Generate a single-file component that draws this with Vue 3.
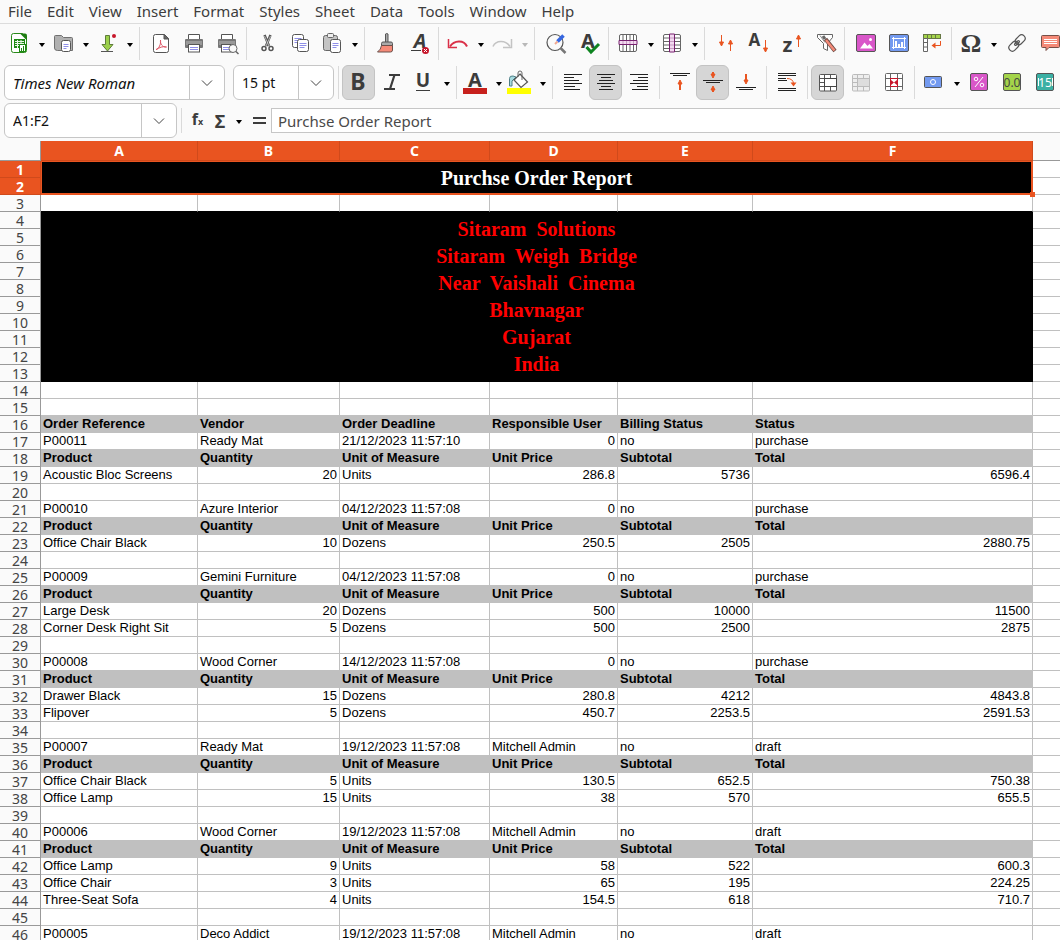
<script setup>
import { ref } from 'vue'

const ink = '#3c3c3c'
const orange = '#e95420'

const arrow = (x, y1, y2, shaft = 1) => {
  const d = y2 > y1 ? -1 : 1
  return `<path d="M${x} ${y1}V${y2 + d * 3}" stroke="${orange}" stroke-width="${shaft}"/><path d="M${x - 2} ${y2 + d * 4}H${x + 2}L${x} ${y2}Z" fill="${orange}" stroke="${orange}" stroke-width="1"/>`
}
const lines = (list) => `<path d="${list.map(([x, y, w]) => `M${x} ${y}h${w}`).join('')}" stroke="#222" stroke-width="1"/>`
const glyph = (t, x, y, size, extra = '') =>
  `<text x="${x}" y="${y}" font-family="Noto Sans, sans-serif" font-weight="700" font-size="${size}" fill="${ink}" text-anchor="middle" ${extra}>${t}</text>`
const sheet = (x, y, w, h) =>
  `<rect x="${x}" y="${y}" width="${w}" height="${h}" rx="2" fill="#fff" stroke="#555"/><path d="M${x + 2} ${y + 4}h${w - 4}m-${w - 4} 2h${w - 4}m-${w - 4} 2h${w - 6}" stroke="#8f8fe8"/>`

const icons = {
  new: `<path d="M5.500 1.500h9l4 4v13q0 2-2 2h-11q-2 0-2-2v-15q0-2 2-2z" fill="#fff" stroke="#2a8a1a"/><path d="M12 1.500h5q2 0 2 2v5z" fill="#1d7d12"/><path d="M6 7h11v9H6z" fill="#1d8a12"/><path d="M7 9.500h9m-9 2h9m-9 2h9M9.500 8v8m3.500-8v8" stroke="#e9f7e6"/><rect x="11.500" y="12.500" width="6" height="7" fill="#fff" stroke="#1d8a12"/><path d="M13.500 19v-3m2 3v-5" stroke="#1d8a12"/>`,
  open: `<path d="M2.500 16V4.500q0-1 1-1h6l2 2h8q1 0 1 1V18.500h-15q-3 0-3-2.500z" fill="#b0b0b0" stroke="#707070"/>${sheet(9.5, 8.5, 9, 11)}`,
  save: `<path d="M9.500 3.500h4v9h3.500L11.500 19 6 12.500h3.500z" fill="#9bd04a" stroke="#5f7d3a"/><path d="M5 19.500h12" stroke="#555"/><circle cx="18" cy="4" r="2" fill="#c7162b"/>`,
  pdf: `<path d="M7.500 2.500h9l4 4v12q0 2-2 2h-11q-2 0-2-2v-14q0-2 2-2z" fill="#fff" stroke="#555"/><path d="M16 2.500v4.500h4.500z" fill="#666" stroke="#555"/><path d="M8 17.500c3-1 5-5 4.500-9.500c-.5 4 2 7.500 6 7c-4-1-7 .5-10 2.500z" fill="none" stroke="#dd5565"/>`,
  print: `<path d="M7.500 8V2.500h11V8" fill="#fff" stroke="#555"/><path d="M5 7h16q1 0 1 1v7q0 1-1 1H5q-1 0-1-1V8q0-1 1-1z" fill="#777"/><path d="M5 9h16v4H5z" fill="#999"/><rect x="7.500" y="12.500" width="11" height="7.500" fill="#fff" stroke="#555"/><path d="M9 15.500h8m-8 2h8" stroke="#8f8fe8"/>`,
  preview: `<path d="M7.500 8V2.500h11V8" fill="#fff" stroke="#555"/><path d="M5 7h16q1 0 1 1v7q0 1-1 1H5q-1 0-1-1V8q0-1 1-1z" fill="#777"/><path d="M5 9h16v4H5z" fill="#999"/><rect x="7.500" y="12.500" width="11" height="7.500" fill="#fff" stroke="#555"/><path d="M9 15.500h6m-6 2h6" stroke="#8f8fe8"/><circle cx="19" cy="16.500" r="4" fill="#fafafa" stroke="#666"/><path d="M22 19.500l2.500 2.500" stroke="#666" stroke-width="1.500"/>`,
  cut: `<path d="M9.500 3L14 14M15.500 3L11 14" stroke="#555" stroke-width="2.500"/><path d="M9.500 4L14 14M15.500 4L11 14" stroke="#ddd" stroke-width=".7"/><circle cx="9" cy="16.500" r="2" fill="#fff" stroke="#555" stroke-width="1.500"/><circle cx="16" cy="16.500" r="2" fill="#fff" stroke="#555" stroke-width="1.500"/>`,
  copy: `${sheet(4.5, 2.5, 11, 13)}${sheet(9.5, 7.5, 11, 12)}`,
  paste: `<path d="M4.500 3.500h10q2 0 2 2v11q0 2-2 2h-10q-2 0-2-2v-11q0-2 2-2z" fill="#c4c4c4" stroke="#666"/><rect x="6.500" y="1.500" width="6" height="4" rx="1" fill="#eee" stroke="#666"/>${sheet(9.5, 7.5, 10, 13)}`,
  brush: `<path d="M12.500 2v9h2.500V2q-1.250-1-2.500 0z" fill="#aaa" stroke="#555"/><path d="M8.500 13.500v-2q0-1.500 1.500-1.500h8q1.500 0 1.500 1.500v2z" fill="#aaa" stroke="#555"/><path d="M8.500 13.500h11V18q0 2-2 2h-13q3.500-2.500 4-6.500z" fill="#f58a78" stroke="#6b504b"/>`,
  clear: `${glyph('A', 14, 16, 20, 'font-style="italic"')}<path d="M5 18.500h10" stroke="${ink}"/><circle cx="19.500" cy="18.500" r="3.500" fill="#c7162b"/><path d="M18 17l3 3m0-3l-3 3" stroke="#fff"/>`,
  undo: `<path d="M3 14.500C7 8 17 7.500 20 14.500" fill="none" stroke="#da3048" stroke-width="2"/><path d="M1.500 7v8.500H10" fill="none" stroke="#da3048" stroke-width="1.500"/>`,
  redo: `<path d="M19 14.500C15 8 5 7.500 2 14.500" fill="none" stroke="#c3c3c3" stroke-width="1.500"/><path d="M20.500 7v8.500H12" fill="none" stroke="#c3c3c3" stroke-width="1.500"/>`,
  find: `<circle cx="12" cy="10.500" r="8" fill="none" stroke="#555" stroke-width="1.200"/><path d="M17.500 16l5 5" stroke="#777" stroke-width="2.500"/><path d="M20.500 3.500l-6 6" stroke="#3566e0" stroke-width="3.500"/><path d="M14.500 9.500l-2.500 2.500" stroke="#f0a890" stroke-width="2"/>`,
  spell: `${glyph('A', 12, 16, 20)}<path d="M10.500 15l4.500 5L23 12" fill="none" stroke="#0e8420" stroke-width="3"/>`,
  row: `<rect x="2.500" y="2.500" width="17" height="17" rx="1.500" fill="#fff" stroke="#666"/><path d="M6 3v17m3.500-17v17m3.500-17v17m3.500-17v17" stroke="#666"/><path d="M2 8.500h18v4H2z" fill="#f3d9f0" stroke="#77216f"/><path d="M6 9v3m3.500-3v3m3.500-3v3m3.500-3v3" stroke="#c79bc2"/>`,
  col: `<rect x="2.500" y="2.500" width="17" height="17" rx="1.500" fill="#fff" stroke="#666"/><path d="M3 6h17m-17 3.500h17m-17 3.500h17m-17 3.500h17" stroke="#666"/><path d="M8.500 2v18h5V2z" fill="#f3d9f0" stroke="#77216f"/><path d="M9 6h4m-4 3.500h4m-4 3.500h4m-4 3.500h4" stroke="#c79bc2"/>`,
  sort: arrow(8.5, 3, 14) + arrow(17.5, 19, 8),
  asc: glyph('A', 8.5, 13.5, 17) + arrow(19.5, 8, 20),
  desc: glyph('z', 8.5, 20, 20) + arrow(19.5, 15, 3),
  filter: `<path d="M5.500 2.500h15v3l-5 6v7l-4-2v-5l-6-6z" fill="#fff" stroke="#666"/><path d="M8 3.500l5 7" stroke="#888"/><path d="M13.500 7l9.500 12" stroke="#6a4a44" stroke-width="4"/><path d="M11 4l2 3" stroke="#666" stroke-width="3"/><path d="M14 8l8.500 10.500" stroke="#f58a78" stroke-width="2.500"/>`,
  image: `<rect x="3.500" y="2.500" width="19" height="17" rx="1.500" fill="#d957c9" stroke="#555"/><path d="M7 16.500l4.500-6 3 3.500 2-2 3.500 4.500z" fill="#fff"/><circle cx="17.500" cy="7.500" r="1.500" fill="#fff"/>`,
  chart: `<rect x="3.500" y="2.500" width="19" height="17" rx="1.500" fill="#739af0" stroke="#555"/><path d="M7.500 5v12M6 6.500h14M6 15.500h14M18.500 5v12" stroke="#fff"/><path d="M10 15V9m3 6v-3m3 3v-5" stroke="#fff" stroke-width="2"/>`,
  pivot: `<rect x="4.500" y="2.500" width="17" height="4" fill="#a4d44a" stroke="#667744"/><path d="M8.500 2v4m4-4v4m4-4v4" stroke="#667744"/><path d="M4.500 6.500h4v13h-4zM4 10.500h5M4 15h5" fill="#fff" stroke="#666"/><path d="M21.500 9v4.500H14" fill="none" stroke="${orange}"/><path d="M16.500 10.500v6l-4-3z" fill="${orange}"/>`,
  omega: `<text x="11" y="20" font-family="Liberation Serif, serif" font-weight="700" font-size="26" fill="${ink}" text-anchor="middle">Ω</text>`,
  link: `<g transform="rotate(-45 13 11)" fill="none" stroke="#555" stroke-width="1.200"><rect x="3" y="7.500" width="11" height="7" rx="3.500"/><rect x="12" y="7.500" width="11" height="7" rx="3.500"/><rect x="10" y="10" width="6" height="2" rx="1"/></g>`,
  comment: `<path d="M5.500 3.500h16q1 0 1 1v10q0 1-1 1H12l-3 3v-3H5.500q-1 0-1-1v-10q0-1 1-1z" fill="#f58a78" stroke="#775048"/><path d="M7 7.500h13m-13 2h13m-13 2h13" stroke="#fff"/>`,
  bold: glyph('B', 11, 19, 23),
  italic: `<path d="M9 4h11M4 18h11M14.500 4L10 18" stroke="${ink}" stroke-width="2.200"/>`,
  underline: `${glyph('U', 10, 16, 19)}<path d="M3 19.500h14" stroke="${ink}"/>`,
  color: `${glyph('A', 10, 16, 20)}<rect x="-2" y="17" width="24" height="6" fill="#c7201c"/>`,
  fill: `<rect x="-2" y="17" width="24" height="6" fill="#ff0"/><path d="M.5 15V7.500Q.5 4.500 4 5l3 1-4 4v5z" fill="#a7dbe0" stroke="#4f7f86"/><path d="M11 3l7.500 8-6.500 5.500L5 9z" fill="#fff" stroke="#555" stroke-width="1.200"/><path d="M9 6V2q0-2 2-2t2 2v7" fill="none" stroke="#666"/>`,
  left: lines([[3, 3.5, 18], [3, 6.5, 10], [3, 9.5, 15], [3, 12.5, 18], [3, 15.5, 11], [3, 18.5, 16]]),
  center: lines([[3, 3.5, 18], [7, 6.5, 10], [5, 9.5, 14], [3, 12.5, 18], [7, 15.5, 10], [5, 18.5, 14]]),
  right: lines([[3, 3.5, 18], [11, 6.5, 10], [6, 9.5, 15], [3, 12.5, 18], [10, 15.5, 11], [5, 18.5, 16]]),
  top: lines([[2, 2.5, 20], [5, 4.5, 14]]) + arrow(12, 19, 9, 2),
  middle: lines([[2, 9.5, 20], [5, 11.5, 14]]) + arrow(12, 1, 7, 2) + arrow(12, 21, 15, 2),
  bottom: lines([[2, 16.5, 20], [5, 18.5, 14]]) + arrow(12, 3, 13, 2),
  wrap: `${lines([[3, 2.5, 18], [3, 4.5, 18], [3, 7.5, 8], [3, 17.5, 18], [3, 19.5, 18]])}<path d="M3 9.500h9" stroke="#222"/><path d="M12 7.500q6 0 6.500 5" fill="none" stroke="${orange}"/><path d="M15.500 11.500h6l-3 4z" fill="${orange}"/>`,
  merge: `<rect x="3.500" y="3.500" width="17" height="16.500" rx="1" fill="#fff" stroke="#555"/><path d="M3 7.500h18m-18 4h5m-5 4h18M8.500 3v17M14.500 3v4m0 8v5" stroke="#555"/><rect x="8.500" y="7.500" width="12" height="8" fill="#fff" stroke="#444"/>`,
  unmerge: `<rect x="3.500" y="3.500" width="17" height="16.500" rx="1" fill="#eee" stroke="#bbb"/><path d="M3 7.500h18m-18 4h5m-5 4h18M8.500 3v17M14.500 3v4m0 8v5" stroke="#bbb"/><rect x="8.500" y="7.500" width="12" height="8" fill="#ddd" stroke="#bbb"/>`,
  mergeCenter: `<rect x="3.500" y="2.500" width="17" height="17" rx="1" fill="#fff" stroke="#666"/><path d="M3 7.500h18m-18 8h18M8.500 2v18M15.500 2v18" stroke="#666"/><rect x="8.500" y="7.500" width="7" height="8" fill="#fff" stroke="#c7162b"/><path d="M9 9l3 2.500L9 14zm6 0l-3 2.500L15 14z" fill="#c7162b"/>`,
  currency: `<rect x="1.500" y="5.500" width="17" height="11" rx="1" fill="#739af0" stroke="#555"/><circle cx="10" cy="11" r="2.500" fill="none" stroke="#fff"/>`,
  percent: `<rect x="3.500" y="2.500" width="17" height="17" rx="1.500" fill="#d957c9" stroke="#555"/><circle cx="9" cy="8" r="1.800" fill="none" stroke="#fff"/><circle cx="15" cy="14" r="1.800" fill="none" stroke="#fff"/><path d="M16 6L8 16" stroke="#fff"/>`,
  number: `<rect x="3.500" y="2.500" width="17" height="17" rx="1.500" fill="#a4d44a" stroke="#555"/><text x="12" y="15.500" font-family="Noto Sans, sans-serif" font-size="12" fill="#444" text-anchor="middle">0.0</text>`,
  date: `<rect x="3.500" y="2.500" width="17" height="17" rx="1.500" fill="#3bb0a4" stroke="#555"/><path d="M5.500 7v8M19.500 7v8" stroke="#fff"/><text x="12" y="15.500" font-family="Noto Sans, sans-serif" font-size="12" fill="#fff" text-anchor="middle">15</text>`,
}

const parse = (s) => s.trim().split(/\s+/).map((t) =>
  t === '|' ? { sep: true } : { icon: t.replace(/[+*!]/g, ''), drop: t.includes('+'), on: t.includes('*'), off: t.includes('!') })

const standard = parse('new+ open+ save+ | pdf print preview | cut copy paste+ | brush clear | undo+ redo+! | find spell | row+ col+ | sort asc desc filter | image chart pivot | omega+ link comment')
const formatting = parse('| bold* italic underline+ | color+ fill+ | left center* right | top middle* bottom | wrap | merge* unmerge! mergeCenter | currency+ percent number date')

const menus = ['File', 'Edit', 'View', 'Insert', 'Format', 'Styles', 'Sheet', 'Data', 'Tools', 'Window', 'Help']
const columns = ['A', 'B', 'C', 'D', 'E', 'F']
const address = ['Sitaram  Solutions', 'Sitaram  Weigh  Bridge', 'Near  Vaishali  Cinema', 'Bhavnagar', 'Gujarat', 'India']
const formula = ref('Purchse Order Report')

const orderHead = ['Order Reference', 'Vendor', 'Order Deadline', 'Responsible User', 'Billing Status', 'Status']
const lineHead = ['Product', 'Quantity', 'Unit of Measure', 'Unit Price', 'Subtotal', 'Total']
const orders = [
  [['P00011', 'Ready Mat', '21/12/2023 11:57:10', 0, 'no', 'purchase'], ['Acoustic Bloc Screens', 20, 'Units', 286.8, 5736, 6596.4]],
  [['P00010', 'Azure Interior', '04/12/2023 11:57:08', 0, 'no', 'purchase'], ['Office Chair Black', 10, 'Dozens', 250.5, 2505, 2880.75]],
  [['P00009', 'Gemini Furniture', '04/12/2023 11:57:08', 0, 'no', 'purchase'], ['Large Desk', 20, 'Dozens', 500, 10000, 11500], ['Corner Desk Right Sit', 5, 'Dozens', 500, 2500, 2875]],
  [['P00008', 'Wood Corner', '14/12/2023 11:57:08', 0, 'no', 'purchase'], ['Drawer Black', 15, 'Dozens', 280.8, 4212, 4843.8], ['Flipover', 5, 'Dozens', 450.7, 2253.5, 2591.53]],
  [['P00007', 'Ready Mat', '19/12/2023 11:57:08', 'Mitchell Admin', 'no', 'draft'], ['Office Chair Black', 5, 'Units', 130.5, 652.5, 750.38], ['Office Lamp', 15, 'Units', 38, 570, 655.5]],
  [['P00006', 'Wood Corner', '19/12/2023 11:57:08', 'Mitchell Admin', 'no', 'draft'], ['Office Lamp', 9, 'Units', 58, 522, 600.3], ['Office Chair', 3, 'Units', 65, 195, 224.25], ['Three-Seat Sofa', 4, 'Units', 154.5, 618, 710.7]],
  [['P00005', 'Deco Addict', '19/12/2023 11:57:08', 'Mitchell Admin', 'no', 'draft']],
]
const blank = () => ({ cells: ['', '', '', '', '', ''] })
const body = [blank(), blank(), { cells: orderHead, head: true }]
orders.forEach(([order, ...items], i) => {
  if (i) body.push(blank())
  body.push({ cells: order })
  if (items.length) body.push({ cells: lineHead, head: true })
  items.forEach((cells) => body.push({ cells }))
})
</script>

<template>
  <div class="app">
    <nav class="menu">
      <a v-for="m in menus" :key="m" href="#">{{ m }}</a>
    </nav>

    <div class="toolbar">
      <template v-for="(t, i) in standard" :key="i">
        <span v-if="t.sep" class="sep"></span>
        <template v-else>
          <button class="tool" :aria-label="t.icon"><svg viewBox="0 0 23 23" fill="none" v-html="icons[t.icon]" /></button>
          <button v-if="t.drop" class="more" :class="{ off: t.off }" :aria-label="t.icon + ' options'"></button>
        </template>
      </template>
    </div>

    <div class="toolbar">
      <div class="combo font">
        <select aria-label="Font name"><option>Times New Roman</option></select>
        <span class="chevron"><svg viewBox="0 0 12 12"><path d="M1 3.500l5 5 5-5" /></svg></span>
      </div>
      <div class="combo size">
        <select aria-label="Font size"><option>15 pt</option></select>
        <span class="chevron"><svg viewBox="0 0 12 12"><path d="M1 3.500l5 5 5-5" /></svg></span>
      </div>
      <template v-for="(t, i) in formatting" :key="i">
        <span v-if="t.sep" class="sep"></span>
        <template v-else>
          <button class="tool" :class="{ on: t.on }" :aria-label="t.icon"><svg viewBox="0 0 23 23" fill="none" v-html="icons[t.icon]" /></button>
          <button v-if="t.drop" class="more" :aria-label="t.icon + ' options'"></button>
        </template>
      </template>
    </div>

    <div class="toolbar entry">
      <div class="combo name">
        <select aria-label="Name box"><option>A1:F2</option></select>
        <span class="chevron"><svg viewBox="0 0 12 12"><path d="M1 3.500l5 5 5-5" /></svg></span>
      </div>
      <span class="sep short"></span>
      <button class="fn wide" aria-label="Function wizard">f<small>x</small></button>
      <button class="fn" aria-label="Sum">Σ</button>
      <button class="more gap" aria-label="Sum options"></button>
      <button class="fn equals" aria-label="Formula"><svg viewBox="0 0 13 9"><path d="M0 2h13M0 7h13" /></svg></button>
      <input v-model="formula" class="formula" aria-label="Formula input" />
    </div>

    <div class="sheet">
      <table>
        <colgroup>
          <col class="c0" /><col class="ca" /><col class="cb" /><col class="cc" /><col class="cd" /><col class="ce" /><col class="cf" /><col />
        </colgroup>
        <thead>
          <tr>
            <td class="corner"></td>
            <th v-for="c in columns" :key="c" scope="col">{{ c }}</th>
            <td class="rest"></td>
          </tr>
        </thead>
        <tbody>
          <tr>
            <th class="num sel" scope="row">1</th>
            <td class="title" colspan="6" rowspan="2">Purchse Order Report<span class="handle"></span></td>
            <td class="edge"></td>
          </tr>
          <tr><th class="num sel" scope="row">2</th><td class="edge"></td></tr>
          <tr class="before">
            <th class="num" scope="row">3</th>
            <td v-for="c in columns" :key="c"></td>
            <td class="edge"></td>
          </tr>
          <tr v-for="n in 10" :key="n">
            <th class="num" scope="row">{{ n + 3 }}</th>
            <td v-if="n === 1" class="address" colspan="6" rowspan="10">
              <div v-for="a in address" :key="a">{{ a }}</div>
            </td>
            <td class="edge"></td>
          </tr>
          <tr v-for="(r, i) in body" :key="'b' + i" :class="{ head: r.head }">
            <th class="num" scope="row">{{ i + 14 }}</th>
            <td v-for="(c, j) in r.cells" :key="j" :class="{ right: typeof c === 'number' }">{{ c }}</td>
            <td class="edge"></td>
          </tr>
        </tbody>
      </table>
    </div>
  </div>
</template>

<style>
body { overflow: hidden; }
</style>

<style scoped>
.app {
  height: 100vh;
  display: flex;
  flex-direction: column;
  overflow: hidden;
  background: #fafafa;
  color: #3d3d3d;
  font-family: "Noto Sans", sans-serif;
  font-size: 14px;
}
button {
  border: 0;
  padding: 0;
  background: none;
  color: inherit;
  font-family: inherit;
}
.menu {
  display: flex;
  flex: none;
  gap: 15px;
  height: 23px;
  padding: 0 8px;
  border-bottom: 1px solid #dcdcdc;
}
.menu a {
  color: inherit;
  font-size: 15px;
  line-height: 23px;
  text-decoration: none;
}
.toolbar {
  display: flex;
  flex: none;
  align-items: center;
  box-sizing: border-box;
  height: 39px;
  padding-left: 3px;
  overflow: hidden;
}
.entry { padding-bottom: 2px; }
.tool {
  display: flex;
  flex: none;
  align-items: center;
  justify-content: center;
  box-sizing: border-box;
  width: 33px;
  height: 35px;
}
.tool svg {
  width: 23px;
  height: 23px;
  overflow: visible;
}
.tool.on {
  border: 1px solid #c3c3c3;
  border-radius: 6px;
  background: #d6d6d6;
}
.more {
  flex: none;
  width: 11px;
  height: 33px;
}
.more::before {
  content: "";
  display: block;
  width: 0;
  margin: 2px auto 0;
  border: 3px solid transparent;
  border-top: 4px solid #000;
  border-bottom: 0;
}
.more.off::before { border-top-color: #b8b8b8; }
.more.gap { width: 18px; }
.sep {
  flex: none;
  width: 1px;
  height: 33px;
  margin: 0 3px 0 4px;
  background: #dadada;
}
.sep.short { height: 25px; }
.combo {
  position: relative;
  flex: none;
  box-sizing: border-box;
  height: 35px;
  margin-left: 1px;
  border: 1px solid #c6c6c6;
  border-radius: 6px;
  background: #fff;
}
.font { width: 221px; }
.size { width: 101px; margin-left: 8px; }
.name { width: 173px; }
.combo select {
  width: 100%;
  height: 100%;
  padding: 0 40px 0 8px;
  border: 0;
  background: none;
  color: #111;
  font: inherit;
  appearance: none;
}
.font select {
  font-size: 15px;
  font-style: italic;
}
.chevron {
  position: absolute;
  top: 0;
  right: 0;
  bottom: 0;
  display: flex;
  align-items: center;
  justify-content: center;
  width: 34px;
  border-left: 1px solid #c6c6c6;
  pointer-events: none;
}
.chevron svg {
  width: 12px;
  height: 12px;
  fill: none;
  stroke: #444;
}
.fn {
  flex: none;
  width: 20px;
  font-size: 18px;
  font-weight: 700;
  line-height: 24px;
}
.fn.wide {
  width: 25px;
  font-size: 16px;
}
.fn small { font-size: 9px; }
.fn.equals { width: 23px; }
.equals svg {
  display: block;
  width: 13px;
  height: 9px;
  margin: 0 auto;
  stroke: #3c3c3c;
  stroke-width: 2;
}
.formula {
  flex: 1;
  box-sizing: border-box;
  min-width: 0;
  height: 25px;
  padding: 0 6px;
  border: 1px solid #c6c6c6;
  border-right: 0;
  background: #fff;
  color: #4a4a4a;
  font: inherit;
  font-size: 15px;
}
.sheet {
  flex: 1;
  min-height: 0;
  overflow: hidden;
}
table {
  width: 100%;
  table-layout: fixed;
  border-spacing: 0;
  background: #fff;
}
.c0 { width: 41px; }
.ca { width: 157px; }
.cb { width: 142px; }
.cc { width: 150px; }
.cd { width: 128px; }
.ce { width: 135px; }
.cf { width: 280px; }
td, th {
  box-sizing: border-box;
  height: 17px;
  padding: 0 2px;
  border: 0 solid #c0c0c0;
  border-width: 0 1px 1px 0;
  color: #000;
  font-family: "Liberation Sans", Arial, sans-serif;
  font-size: 13px;
  line-height: 16px;
  white-space: nowrap;
}
thead th {
  height: 20px;
  border-color: #d04a1b;
  background: #e95420;
  color: #fff;
  font-family: "Noto Sans", sans-serif;
  font-size: 14px;
  line-height: 19px;
}
.corner, .rest {
  border-color: #999;
  background: #fafafa;
}
.rest, .edge { border-right: 0; }
.num {
  padding: 2px 0 0;
  border-color: #999;
  background: #fafafa;
  color: #444;
  font-family: "Noto Sans", sans-serif;
  font-size: 14px;
  font-weight: 400;
  line-height: 14px;
  text-align: center;
}
.num.sel {
  border-color: #d04a1b;
  background: #e95420;
  color: #fff;
  font-weight: 700;
}
.title {
  position: relative;
  border: 1px solid #e95420;
  border-width: 1px 2px 2px 1px;
  background: #000;
  color: #fff;
  font-family: "Liberation Serif", serif;
  font-size: 20px;
  font-weight: 700;
  line-height: 24px;
  text-align: center;
}
.handle {
  position: absolute;
  right: -4px;
  bottom: -4px;
  width: 5px;
  height: 5px;
  background: #e95420;
}
.before td:not(.edge) { border-bottom-color: #000; }
.address {
  border-color: #000;
  background: #000;
  color: #f00;
  font-family: "Liberation Serif", serif;
  font-size: 20px;
  font-weight: 700;
  line-height: 27px;
  text-align: center;
  white-space: pre;
}
.head td:not(.edge) {
  background: #c0c0c0;
  font-weight: 700;
}
.right { text-align: right; }
</style>
